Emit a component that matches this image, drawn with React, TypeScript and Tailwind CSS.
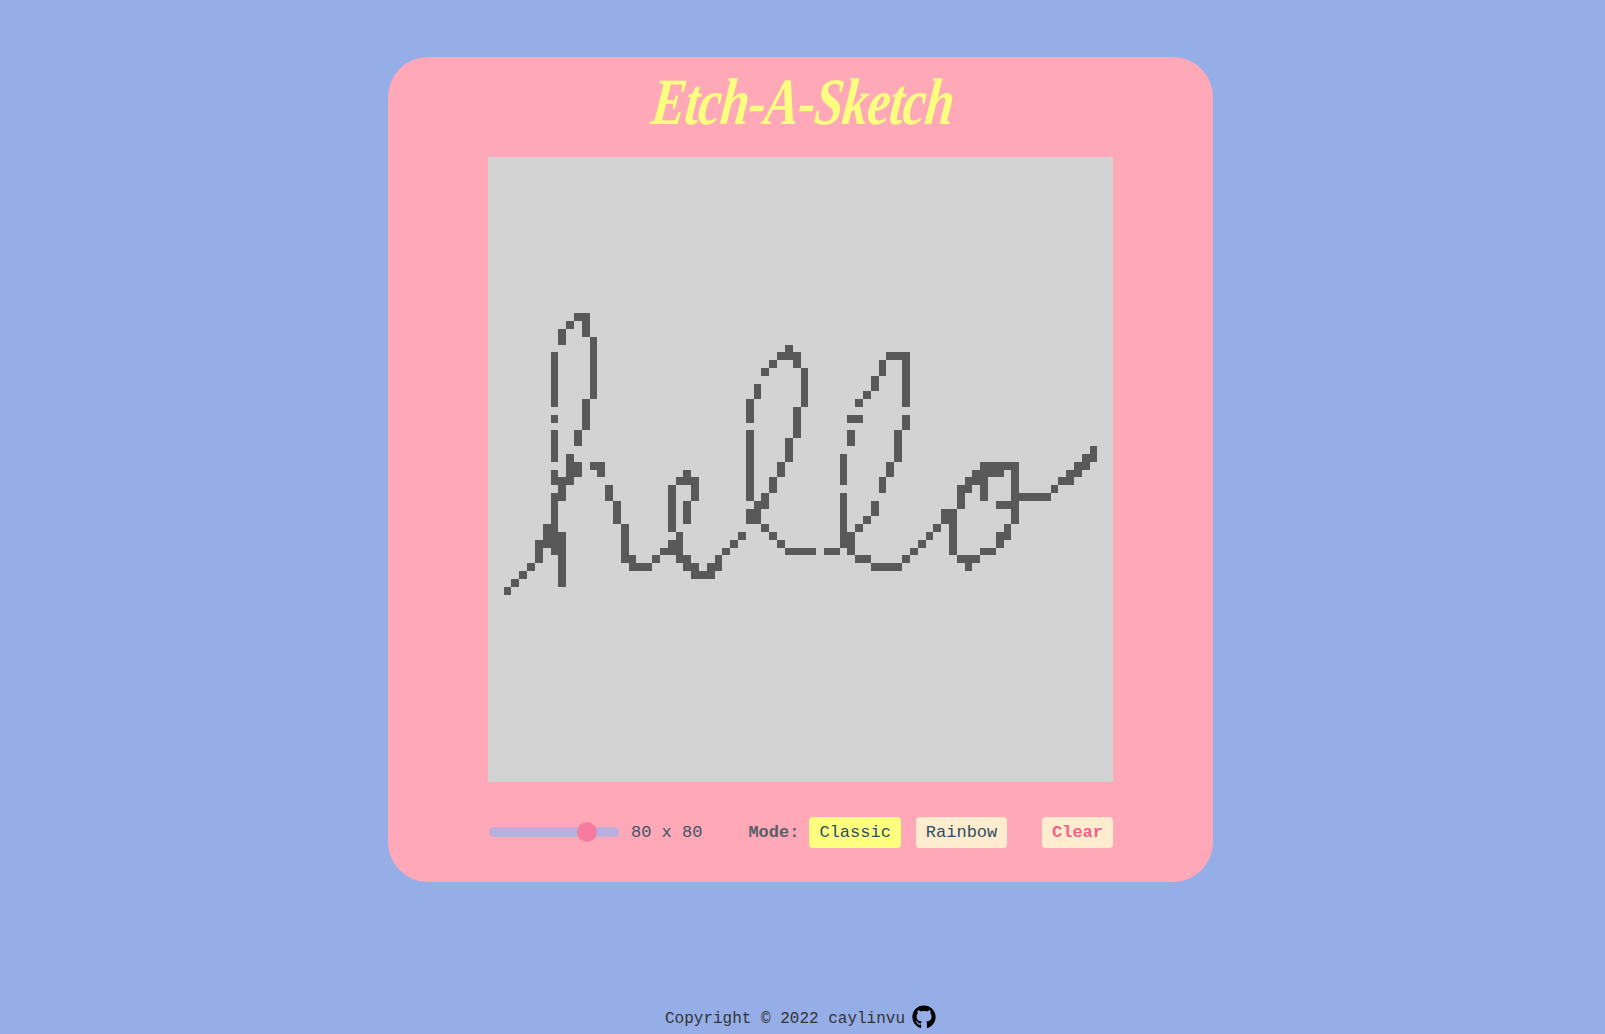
import React, { useState } from 'react';
import { FaGithub } from 'react-icons/fa';

const GRID_SIZE = 80;

// drawn cells per row: single columns or [from, to] runs
const DRAWING: Record<number, (number | [number, number])[]> = {
  20: [[11, 12]],
  21: [10, 12],
  22: [9, 12],
  23: [9, 13],
  24: [13, 38],
  25: [8, 13, [37, 39], [51, 53]],
  26: [8, 13, 36, 39, 50, 53],
  27: [8, 13, 35, 40, 50, 53],
  28: [8, 13, 40, 49, 53],
  29: [8, 13, 34, 40, 49, 53],
  30: [8, 13, 34, 40, 48, 53],
  31: [8, 12, 33, 40, 47, 53],
  32: [12, 33, 39],
  33: [8, 12, 33, 39, [46, 47], 53],
  34: [12, 39, 53],
  35: [8, 11, 33, 39, 46, 52],
  36: [8, 11, 33, 38, 46, 52],
  37: [8, 33, 38, 52, 77],
  38: [8, 10, 33, 38, 45, 52, [76, 77]],
  39: [[10, 11], [13, 14], 33, 37, 45, 51, [63, 67], [75, 76]],
  40: [8, [10, 11], 14, 25, 33, 37, 45, 51, [62, 65], 67, [74, 75]],
  41: [[8, 10], [24, 26], 33, 36, 45, 50, [61, 63], 67, [73, 74]],
  42: [9, 15, 23, 26, 33, 36, 50, [60, 61], 63, 67, 72],
  43: [[8, 9], 15, 23, 26, 33, 35, 45, 60, 63, [67, 71]],
  44: [8, 16, 23, 25, [34, 35], 45, 49, 60, [65, 67]],
  45: [8, 16, 23, 25, [33, 34], 45, 49, [58, 59], 67],
  46: [8, 16, 23, 25, [33, 34], 45, 48, [58, 59], 67],
  47: [[7, 8], 17, 23, 35, 45, 47, 57, 59, 66],
  48: [[7, 9], 17, 24, 32, 36, [45, 46], 56, 59, [65, 66]],
  49: [[6, 9], 17, [23, 24], 31, 37, [45, 46], 55, 59, 65],
  50: [6, [8, 9], 17, [22, 24], 30, [38, 41], [43, 44], 46, 54, 59, [63, 64]],
  51: [6, 9, [17, 18], 21, [24, 25], 29, [47, 48], 53, [60, 62]],
  52: [5, 9, [18, 20], [25, 26], [28, 29], [49, 52], 61],
  53: [4, 9, [26, 28]],
  54: [3, 9],
  55: [2],
};

const isDrawn = (row: number, col: number) =>
  (DRAWING[row] ?? []).some((c) => (Array.isArray(c) ? col >= c[0] && col <= c[1] : col === c));

const Grid: React.FC = () => {
  const cells = [];
  for (let row = 0; row < GRID_SIZE; row++) {
    for (let col = 0; col < GRID_SIZE; col++) {
      cells.push(<div key={`${row}-${col}`} className={isDrawn(row, col) ? 'bg-[#595959]' : ''} />);
    }
  }
  return (
    <div className="grid h-[625px] w-[625px] grid-cols-[repeat(80,1fr)] grid-rows-[repeat(80,1fr)] bg-[#d3d3d3]">
      {cells}
    </div>
  );
};

const ModeButton: React.FC<{ label: string; active?: boolean; onClick: () => void }> = ({ label, active, onClick }) => (
  <button
    onClick={onClick}
    className={`h-[31px] rounded-[4px] px-[10px] text-[17px] leading-none text-[#2c4f63] ${active ? 'bg-[#ffff7f]' : 'bg-[#ffebcd]'}`}
  >
    {label}
  </button>
);

export default function App() {
  const [size, setSize] = useState(80);
  const [mode, setMode] = useState('classic');

  return (
    <div className="min-h-screen bg-[#96aee7] font-['Liberation_Mono',monospace]">
      <div className="flex min-h-[1034px] w-[1601px] flex-col items-center justify-between pt-[57px] pb-[5px]">
        <main className="flex h-[825px] w-[825px] flex-col items-center rounded-[40px] bg-[#ffa8b8]">
          <h1 className="ml-[4px] flex h-[100px] -skew-x-[8deg] scale-x-[0.78] items-center whitespace-nowrap pb-[10px] font-['Liberation_Serif',serif] text-[66px] font-bold italic leading-none tracking-[-1px] text-[#ffff7f]">
            Etch-A-Sketch
          </h1>
          <Grid />
          <div className="flex h-[100px] w-[625px] items-center text-[17px] text-[#2c4f63]">
            <input
              type="range"
              min={1}
              max={100}
              value={size}
              onChange={(e) => setSize(Number(e.target.value))}
              className="ml-[1px] h-[10px] w-[130px] cursor-pointer appearance-none rounded-full bg-[#b8b0dc] [&::-webkit-slider-thumb]:h-5 [&::-webkit-slider-thumb]:w-5 [&::-webkit-slider-thumb]:appearance-none [&::-webkit-slider-thumb]:rounded-full [&::-webkit-slider-thumb]:bg-[#f67c9f]"
            />
            <span className="ml-[12px] mt-[2px] text-[#3b5566]">
              {size} x {size}
            </span>
            <span className="ml-[46px] mt-[2px] font-bold text-[#595f66]">Mode:</span>
            <div className="ml-[10px] flex gap-[15px]">
              <ModeButton label="Classic" active={mode === 'classic'} onClick={() => setMode('classic')} />
              <ModeButton label="Rainbow" active={mode === 'rainbow'} onClick={() => setMode('rainbow')} />
            </div>
            <button className="ml-auto h-[31px] rounded-[4px] bg-[#ffebcd] px-[10px] text-[17px] font-bold leading-none text-[#f4608c]">
              Clear
            </button>
          </div>
        </main>
        <footer className="flex items-end gap-[7px] text-base text-[#333333]">
          <span className="pb-[2px] leading-none">Copyright © 2022 caylinvu</span>
          <FaGithub className="h-6 w-6 text-black" />
        </footer>
      </div>
    </div>
  );
}
